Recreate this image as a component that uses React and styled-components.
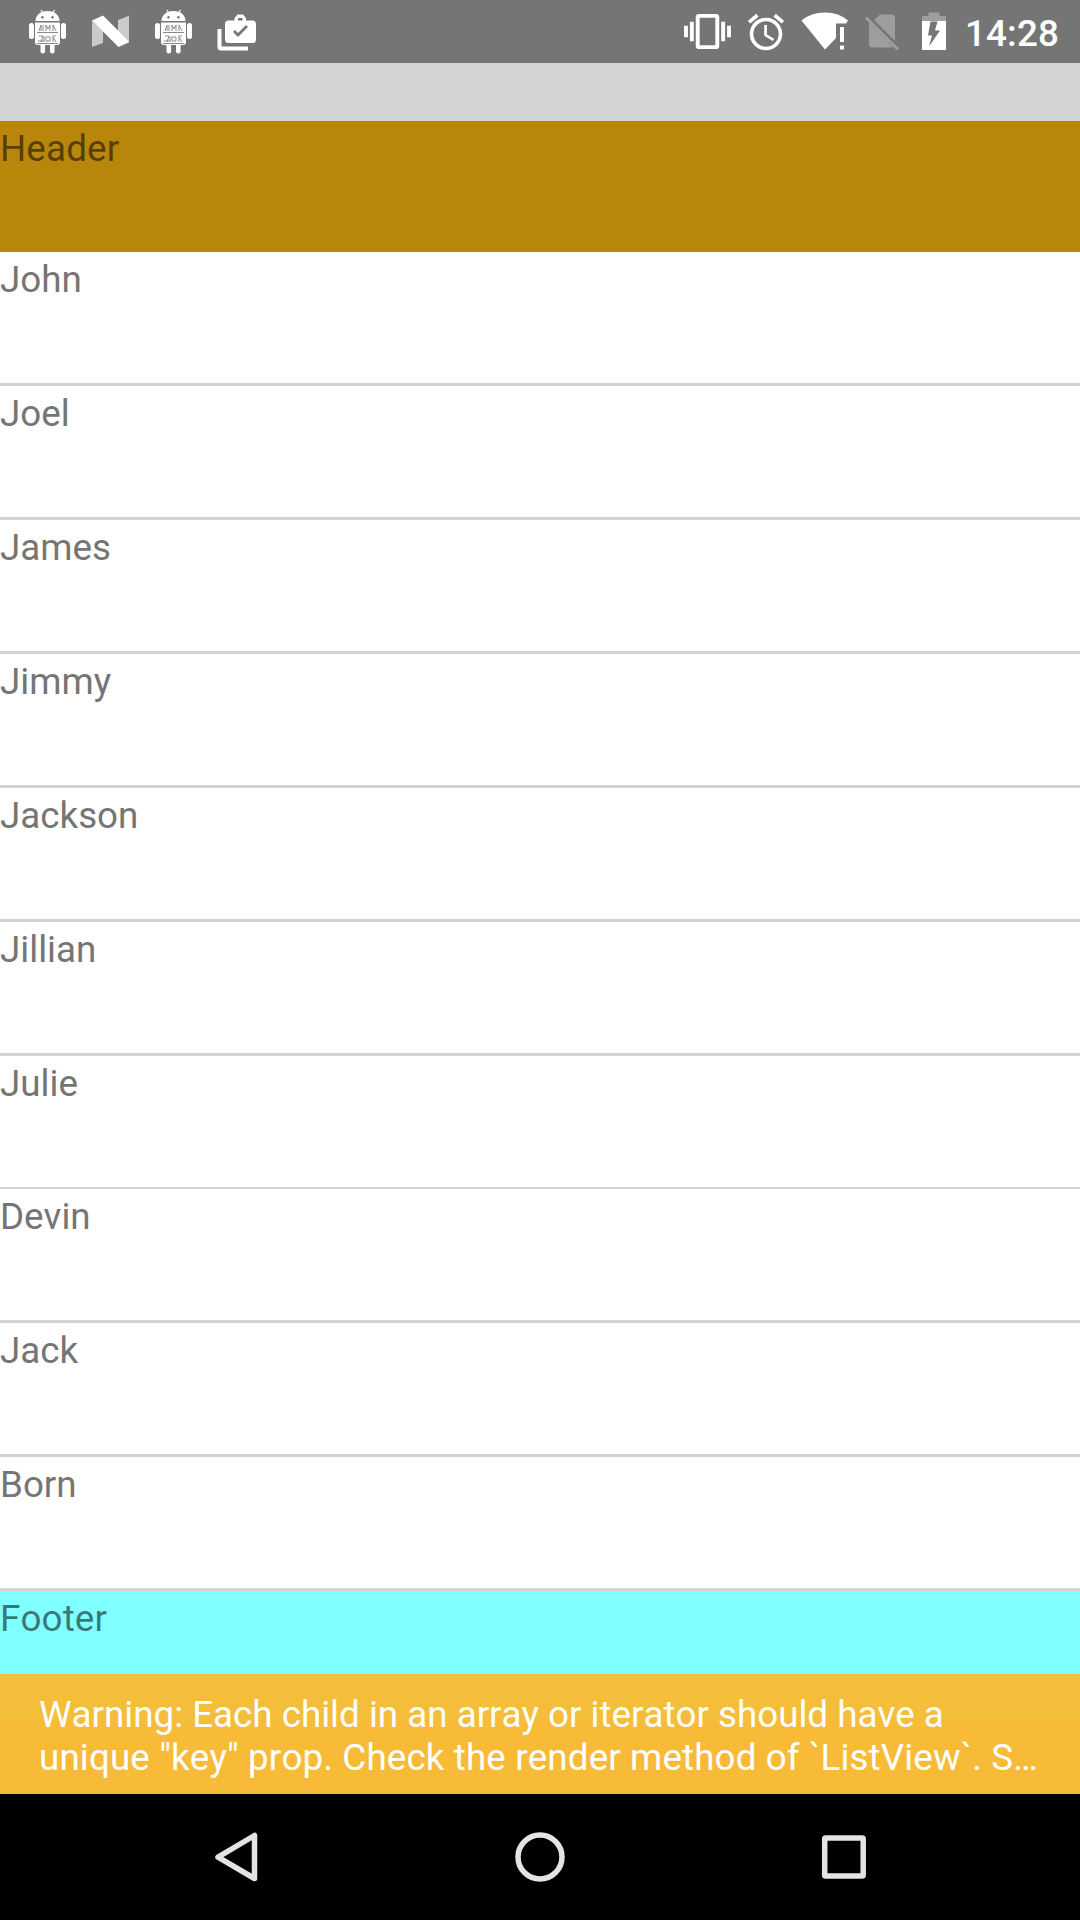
import React from "react";
import styled, { createGlobalStyle } from "styled-components";

const Global = createGlobalStyle`
  html, body { margin: 0; padding: 0; background: #d3d3d3; }
  * { box-sizing: border-box; }
`;

const Screen = styled.div`
  width: 1080px;
  height: 1920px;
  display: flex;
  flex-direction: column;
  overflow: hidden;
  background: #d3d3d3;
  font-family: Roboto, "Noto Sans", sans-serif;
  font-size: 36.75px;
  font-kerning: none;
  line-height: 43px;
`;

const StatusBar = styled.header`
  flex: none;
  height: 63px;
  display: flex;
  justify-content: space-between;
  padding-left: 28px;
  background: #757575;
  color: #fff;
`;

const IconGroup = styled.div`
  display: flex;
  align-items: flex-start;
  gap: ${(p) => p.$gap}px;
`;

const SystemGroup = styled(IconGroup)`
  width: 396px;
`;

const Glyph = styled.svg`
  display: block;
  flex: none;
  fill: #fff;
`;

const Clock = styled.time`
  margin-left: 2px;
  padding-top: 12px;
  font-weight: 500;
  letter-spacing: 0.15px;
`;

const List = styled.main`
  flex: none;
  height: 1611px;
  padding-top: 58px;
  overflow: hidden;
`;

const Section = styled.div`
  height: 131px;
  padding-top: 6px;
  background: ${(p) => p.$bg};
  color: rgba(0, 0, 0, 0.54);
  letter-spacing: 0.15px;
`;

const Row = styled.div`
  height: ${(p) => 131 + p.$line}px;
  padding-top: 6px;
  background: #fff;
  color: #757575;
  border-bottom: ${(p) => p.$line}px solid #d3d3d3;
`;

const Warning = styled.aside`
  flex: none;
  height: 120px;
  padding: 19px 39px 0;
  background: linear-gradient(#f4bd3a 48px, #f8bb38 48px);
  color: #fff;
  white-space: nowrap;
`;

const WarningLine = styled.div`
  letter-spacing: ${(p) => p.$spacing}px;
`;

const NavBar = styled.nav`
  flex: none;
  height: 126px;
  display: flex;
  justify-content: space-between;
  align-items: center;
  padding: 0 204px;
  background: #000;
`;

const NavGlyph = styled.svg`
  fill: none;
  stroke: #e4e4e4;
  stroke-width: 5.5;
  stroke-linejoin: round;
`;

const names = ["John", "Joel", "James", "Jimmy", "Jackson", "Jillian", "Julie", "Devin", "Jack", "Born"];

const Droid = () => (
  <Glyph width="38" height="63" viewBox="28 0 38 63">
    <path d="M41 10l2.500 4M54.500 10l-2.500 4" stroke="#fff" strokeWidth="1.200" />
    <path d="M35.500 21c0-6 5-10 12-10s12 4 12 10z" />
    <rect x="29" y="23" width="5" height="16" rx="2.500" />
    <rect x="61" y="23" width="5" height="16" rx="2.500" />
    <path d="M35 22.500h25V42a3 3 0 0 1-3 3H38a3 3 0 0 1-3-3z" />
    <rect x="40.500" y="43" width="4.600" height="10.500" rx="2.200" />
    <rect x="50" y="43" width="4.600" height="10.500" rx="2.200" />
    <g fill="#757575"><circle cx="42.500" cy="17.200" r="1.200" /><circle cx="52.500" cy="17.200" r="1.200" /></g>
    <g fill="none" stroke="#8a8a8a" strokeWidth="1">
      <path d="M37 32.500h21M37 43.500h21M39 31l2-6v6M43 25v6M46 31v-6l2 4 2-4v6M53 31v-6l3 6M39 36h4l-2 6M44 42v-6M46 37h4v4h-4zM52 36h4M53 42v-5l3 5M38 41h6" />
    </g>
  </Glyph>
);

const Nougat = () => (
  <Glyph width="38" height="63" viewBox="91 0 38 63">
    <path d="M92 20.500L103 31v12L92 47zM118 20l11.500-4.500V42L118 32z" fill="#cbcbcb" />
    <path d="M92 20.500L103 15.500 129.500 42 118.500 47z" />
  </Glyph>
);

const Briefcase = () => (
  <Glyph width="39" height="63" viewBox="217 0 39 63">
    <path d="M217.500 29h4v17.500h26.500v4h-27a3.500 3.500 0 0 1-3.500-3.500z" />
    <path fillRule="evenodd" d="M228.500 20.500h6V18l3-3.500h5.500l3 3.500v2.500h6.500a3.500 3.500 0 0 1 3.500 3.500v15.500a3.500 3.500 0 0 1-3.500 3.500h-24a3.500 3.500 0 0 1-3.500-3.500V24a3.500 3.500 0 0 1 3.500-3.500zM238 18v2.500h4.500V18z" />
    <path d="M234 31l4 4 9-9" fill="none" stroke="#757575" strokeWidth="2.800" />
  </Glyph>
);

const Vibrate = () => (
  <Glyph width="47" height="63" viewBox="0 -4.100 24 32.200">
    <path d="M0 15h2V9H0v6zm3 2h2V7H3v10zm19-8v6h2V9h-2zm-3 8h2V7h-2v10zM16.500 3h-9C6.670 3 6 3.670 6 4.500v15c0 .83.67 1.500 1.500 1.500h9c.83 0 1.500-.67 1.500-1.500v-15c0-.83-.67-1.500-1.500-1.500zM16 19H8V5h8v14z" />
  </Glyph>
);

const Alarm = () => (
  <Glyph width="36" height="63" viewBox="748 0 36 63">
    <path transform="translate(744.300 10.500) scale(1.810)" d="M22 5.720l-4.600-3.860-1.290 1.530 4.600 3.860L22 5.720zM7.880 3.390L6.600 1.860 2 5.710l1.290 1.530 4.590-3.850zM12.500 8H11v6l4.750 2.850.75-1.230-4-2.370V8zM12 4c-4.970 0-9 4.030-9 9s4.020 9 9 9c4.970 0 9-4.030 9-9s-4.030-9-9-9zm0 16c-3.870 0-7-3.130-7-7s3.130-7 7-7 7 3.130 7 7-3.130 7-7 7z" />
  </Glyph>
);

const Wifi = () => (
  <Glyph width="47" height="63" viewBox="801 0 47 63">
    <path d="M801.500 20.500Q811 12.500 825 12.500T848 20.500L846 23.500H836V38L825 49.500z" />
    <path d="M840 27h4v15h-4zM840 45.500h4v4h-4z" />
  </Glyph>
);

const NoSim = () => (
  <Glyph width="34" height="63" viewBox="865 0 34 63">
    <path d="M880 14.500h12a3 3 0 0 1 3 3V41L874 20zM869 22.500L893.500 47.500H872a3 3 0 0 1-3-3z" fill="#9e9e9e" />
    <path d="M866 17.500l32 32" stroke="#9e9e9e" strokeWidth="2.800" />
  </Glyph>
);

const Battery = () => (
  <Glyph width="30" height="63" viewBox="916 0 30 63">
    <path d="M922 21v-5h6.500v-3.500h11V16h6.500v5z" fill="#9e9e9e" />
    <path d="M922 21h24v29h-24z" />
    <path d="M930.500 21.500h7l-2.500 9h5L929 46.500l3-11h-4z" fill="#757575" />
  </Glyph>
);

export default function App() {
  return (
    <Screen>
      <Global />
      <StatusBar>
        <IconGroup $gap={25}>
          <Droid />
          <Nougat />
          <Droid />
          <Briefcase />
        </IconGroup>
        <SystemGroup $gap={17}>
          <Vibrate />
          <Alarm />
          <Wifi />
          <NoSim />
          <Battery />
          <Clock>14:28</Clock>
        </SystemGroup>
      </StatusBar>
      <List>
        <Section $bg="#b8860b">Header</Section>
        {names.map((name, i) => (
          <Row key={name} $line={i === 6 ? 2 : 3}>{name}</Row>
        ))}
        <Section $bg="#7fffff">Footer</Section>
      </List>
      <Warning>
        <WarningLine $spacing={0}>Warning: Each child in an array or iterator should have a</WarningLine>
        <WarningLine $spacing={0.13}>unique "key" prop. Check the render method of `ListView`. S…</WarningLine>
      </Warning>
      <NavBar>
        <NavGlyph width="64" height="64" viewBox="204 1825 64 64">
          <path d="M218 1857.200L254.500 1835.500V1878.500z" />
        </NavGlyph>
        <NavGlyph width="64" height="64" viewBox="508 1825 64 64">
          <circle cx="540" cy="1857" r="22" />
        </NavGlyph>
        <NavGlyph width="64" height="64" viewBox="812 1825 64 64">
          <rect x="824.700" y="1838" width="38.500" height="38" rx="1" />
        </NavGlyph>
      </NavBar>
    </Screen>
  );
}
